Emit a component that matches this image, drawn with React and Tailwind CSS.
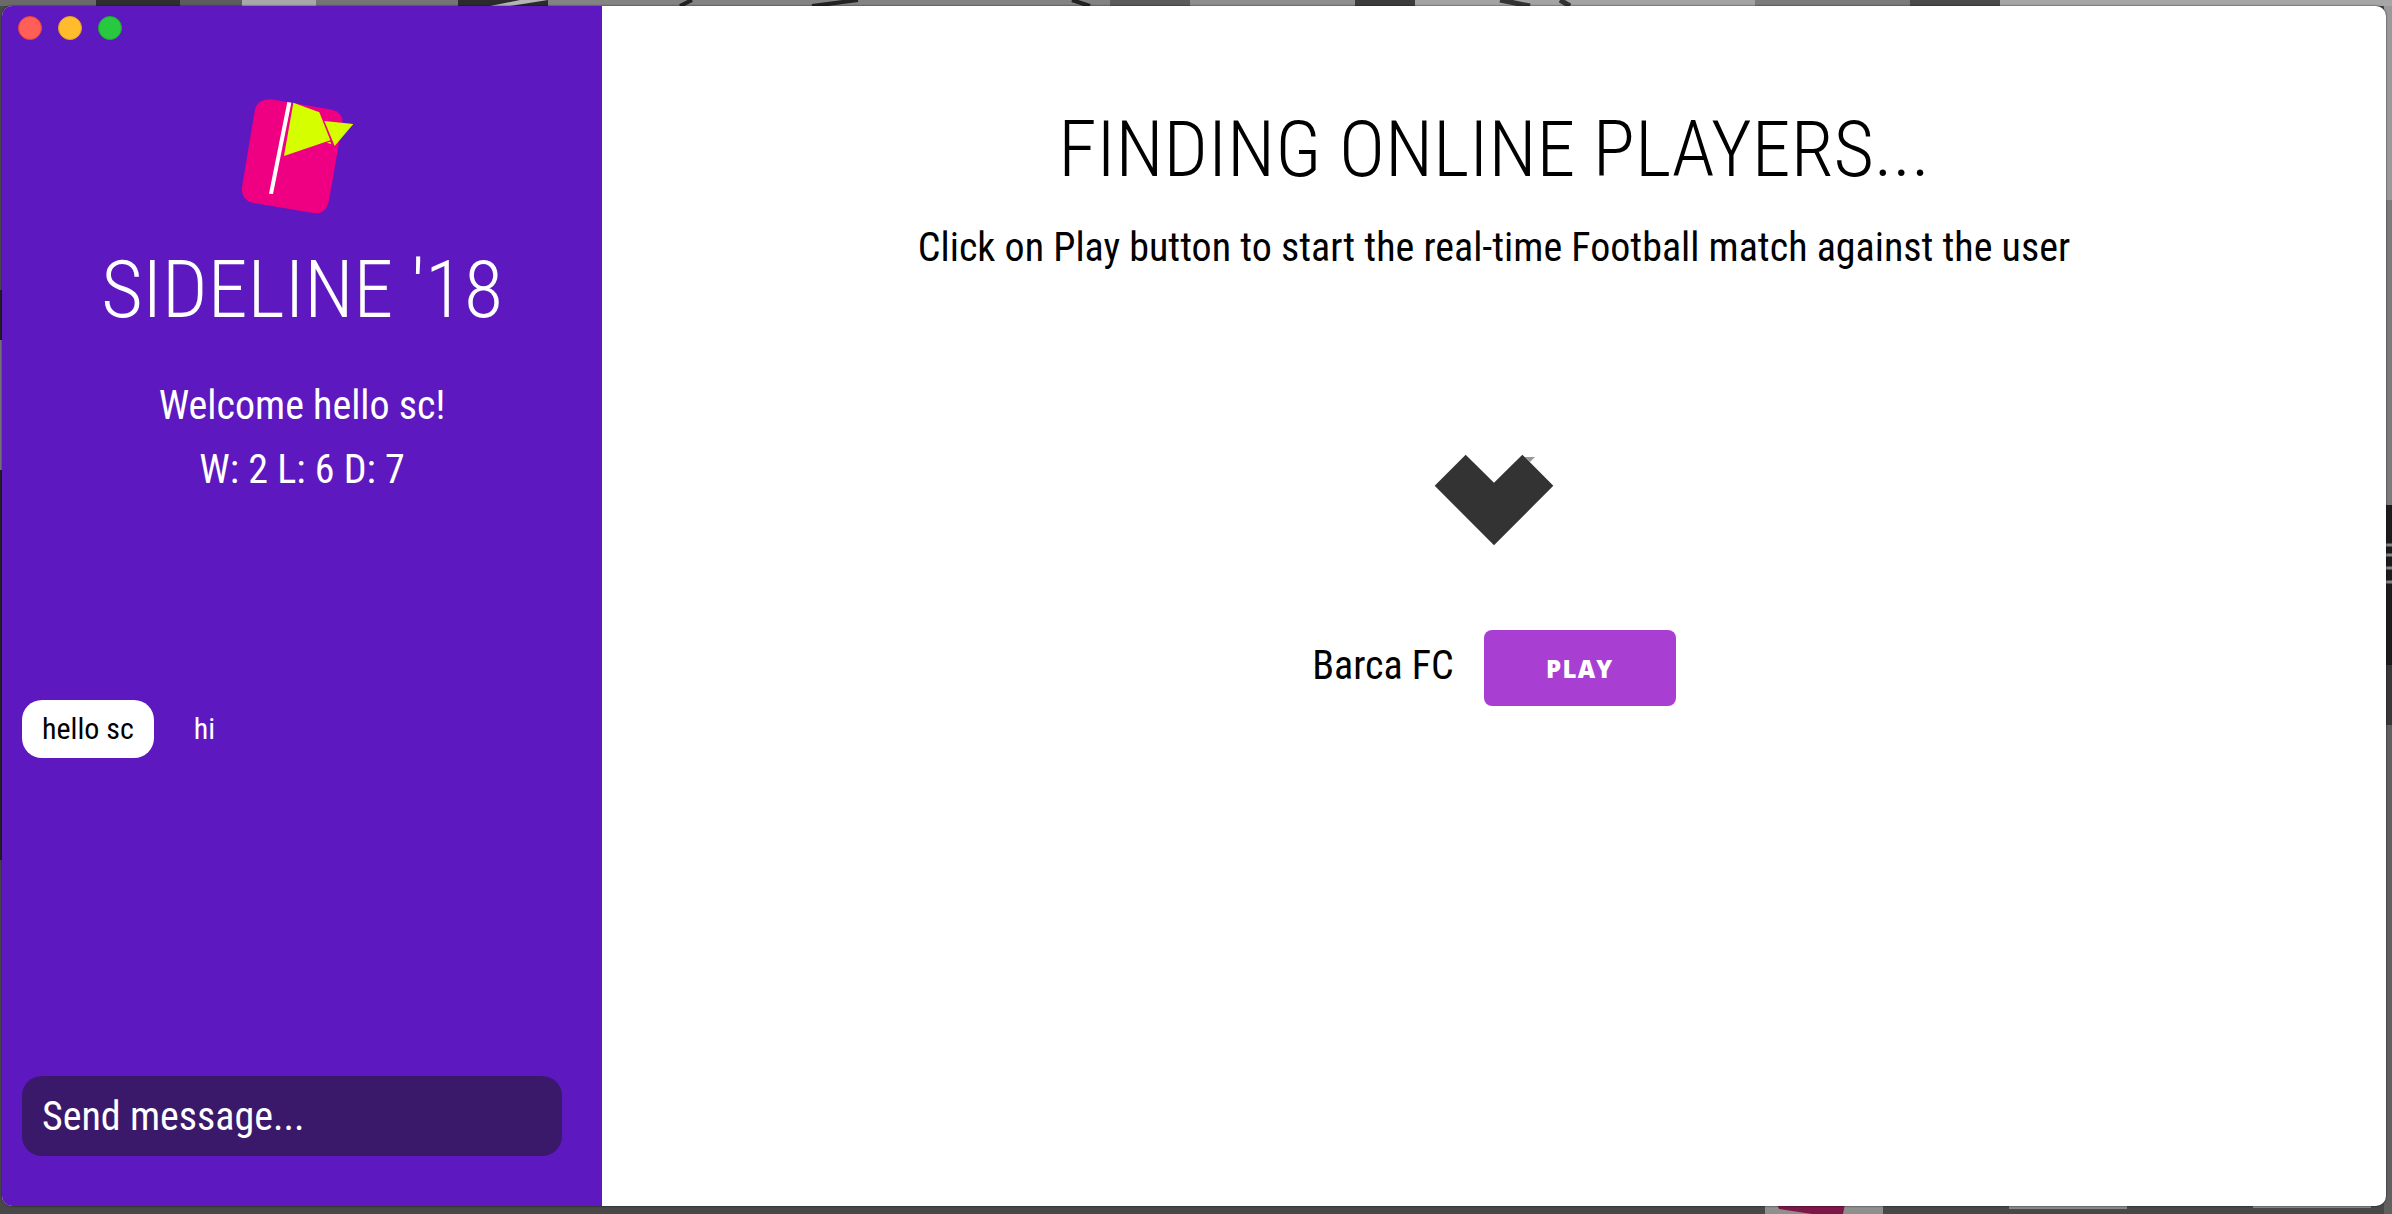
const messages = [{ id: 1, user: 'hello sc', text: 'hi' }];

const players = [{ id: 1, team: 'Barca FC' }];

function Wallpaper() {
  return (
    <svg className="absolute inset-0 w-full h-full" viewBox="0 0 2392 1214" preserveAspectRatio="none" aria-hidden="true">
      <rect width="2392" height="1214" fill="#484848" />

      {/* top edge */}
      <rect width="96" height="6" fill="#6a6a6a" />
      <rect x="96" width="84" height="6" fill="#2e2e2e" />
      <rect x="180" width="62" height="6" fill="#5c5c5c" />
      <rect x="242" width="74" height="6" fill="#a8a8a8" />
      <rect x="316" width="142" height="6" fill="#747474" />
      <rect x="458" width="90" height="6" fill="#2b2b2b" />
      <path d="M490 6 L520 0 L548 0 L510 6 Z" fill="#b5b5b5" />
      <rect x="548" width="562" height="6" fill="#838383" />
      <path d="M680 6 L692 0 M812 6 L858 0 M1072 0 L1090 6" stroke="#222" strokeWidth="4" />
      <rect x="1110" width="80" height="6" fill="#5b5b5b" />
      <rect x="1190" width="165" height="6" fill="#8e8e8e" />
      <rect x="1355" width="60" height="6" fill="#3c3c3c" />
      <rect x="1415" width="340" height="6" fill="#a3a3a3" />
      <path d="M1500 0 L1530 6 M1560 0 L1570 6" stroke="#333" strokeWidth="5" />
      <rect x="1755" width="155" height="6" fill="#7b7b7b" />
      <rect x="1910" width="90" height="6" fill="#4a4a4a" />
      <rect x="2000" width="392" height="6" fill="#a6a6a6" />

      {/* right edge */}
      <rect x="2384" y="6" width="8" height="194" fill="#9a9a9a" />
      <rect x="2384" y="200" width="8" height="305" fill="#7b7b7b" />
      <rect x="2384" y="505" width="8" height="160" fill="#1c1c1c" />
      <path d="M2384 545 H2392 M2384 555 H2392 M2384 568 H2392 M2384 582 H2392" stroke="#858585" strokeWidth="3" />
      <rect x="2384" y="665" width="8" height="60" fill="#383838" />
      <rect x="2384" y="725" width="8" height="489" fill="#606060" />

      {/* left edge */}
      <rect y="6" width="3" height="284" fill="#4a4a4a" />
      <rect y="290" width="3" height="50" fill="#202020" />
      <rect y="340" width="3" height="130" fill="#777" />
      <rect y="470" width="3" height="390" fill="#222" />

      {/* bottom edge, with the dock peeking out */}
      <rect x="1765" y="1204" width="118" height="10" fill="#8f8f8f" />
      <path d="M1777 1204 H1845 L1843 1214 H1812 L1779 1209 Z" fill="#7c1747" />
      <rect x="2009" y="1204" width="118" height="5" fill="#8a8a8a" />
      <rect x="2253" y="1204" width="118" height="4" fill="#8a8a8a" />
    </svg>
  );
}

function TrafficLights() {
  return (
    <div className="flex gap-4 px-4 pt-[10px]">
      <button aria-label="Close" className="size-6 rounded-full bg-[#ff5f57] border border-[#e2453c]" />
      <button aria-label="Minimize" className="size-6 rounded-full bg-[#ffbd2e] border border-[#e0a028]" />
      <button aria-label="Zoom" className="size-6 rounded-full bg-[#28c940] border border-[#1eab30]" />
    </div>
  );
}

function Logo() {
  return (
    <svg className="w-[164px] h-[150px]" viewBox="0 0 492 450" aria-hidden="true">
      <path
        d="M153 58 L337 89 Q371 98 367 132 L326 366 Q318 402 283 400 L97 368 Q62 358 66 322 L105 88 Q114 56 153 58 Z"
        fill="#ef0082"
      />
      <path d="M202 66 L214 68 L159 342 L147 341 Z" fill="#fff" />
      <path d="M220 68 L298 97 L331 181 L192 228 Z" fill="#d5ff00" />
      <path d="M313 123 L400 132 L344 198 Z" fill="#d5ff00" />
      <path d="M320 188 L331 185 L334 192 Z" fill="#d5ff00" />
    </svg>
  );
}

function Loader() {
  return (
    <svg className="w-[120px] h-[92px]" viewBox="0 0 360 276" aria-label="Loading">
      <path d="M272 9 L303 9 L288 24 Z" fill="#999" />
      <path d="M2 95 L95 2 L180 86 L265 2 L358 95 L180 274 Z" fill="#333" />
    </svg>
  );
}

function Sidebar() {
  return (
    <aside className="w-[600px] shrink-0 flex flex-col bg-[#5d18bf] text-white">
      <TrafficLights />
      <div className="flex flex-col items-center pt-10 text-center">
        <Logo />
        <h1 className="mt-5 text-[80px] leading-[80px] font-[350]">SIDELINE '18</h1>
        <p className="mt-11 text-[40px] leading-[64px]">Welcome hello sc!</p>
        <p className="text-[40px] leading-[64px]">W: 2 L: 6 D: 7</p>
      </div>
      <ul className="mt-auto h-[368px] px-5">
        {messages.map((m) => (
          <li key={m.id} className="flex items-center text-[30px] leading-[38px]">
            <span className="bg-white text-black rounded-[20px] px-5 py-[10px]">{m.user}</span>
            <span className="ml-10">{m.text}</span>
          </li>
        ))}
      </ul>
      <form className="px-5 pt-2 pb-[50px]" onSubmit={(e) => e.preventDefault()}>
        <input
          aria-label="Send message"
          placeholder="Send message..."
          className="block w-[540px] h-20 rounded-[20px] px-5 text-[40px] bg-[#3a196b] placeholder:text-white outline-none"
        />
      </form>
    </aside>
  );
}

export default function App() {
  return (
    <div className="relative min-h-screen flex flex-col pt-[6px] pr-[6px] pb-2 pl-[2px] font-['Roboto_Condensed','Roboto',sans-serif]">
      <Wallpaper />
      <div className="relative flex-1 flex rounded-[10px] overflow-hidden bg-white shadow-[0_0_2px_rgba(0,0,0,0.8)]">
        <Sidebar />
        <main className="flex-1 flex flex-col items-center pt-[102px] text-black text-center">
          <h2 className="text-[78px] leading-[84px] font-[350]">FINDING ONLINE PLAYERS...</h2>
          <p className="mt-7 text-[40px] leading-[56px]">
            Click on Play button to start the real-time Football match against the user
          </p>
          <div className="mt-[178px]">
            <Loader />
          </div>
          {players.map((p) => (
            <div key={p.id} className="mt-[84px] flex items-center gap-[30px]">
              <span className="text-[40px] leading-[68px] pb-1">{p.team}</span>
              <button className="w-[192px] h-[76px] pt-[2px] rounded-lg bg-[#a83fd2] text-white font-['Open_Sans',sans-serif] font-extrabold text-[24px] tracking-wider">
                PLAY
              </button>
            </div>
          ))}
        </main>
      </div>
    </div>
  );
}
